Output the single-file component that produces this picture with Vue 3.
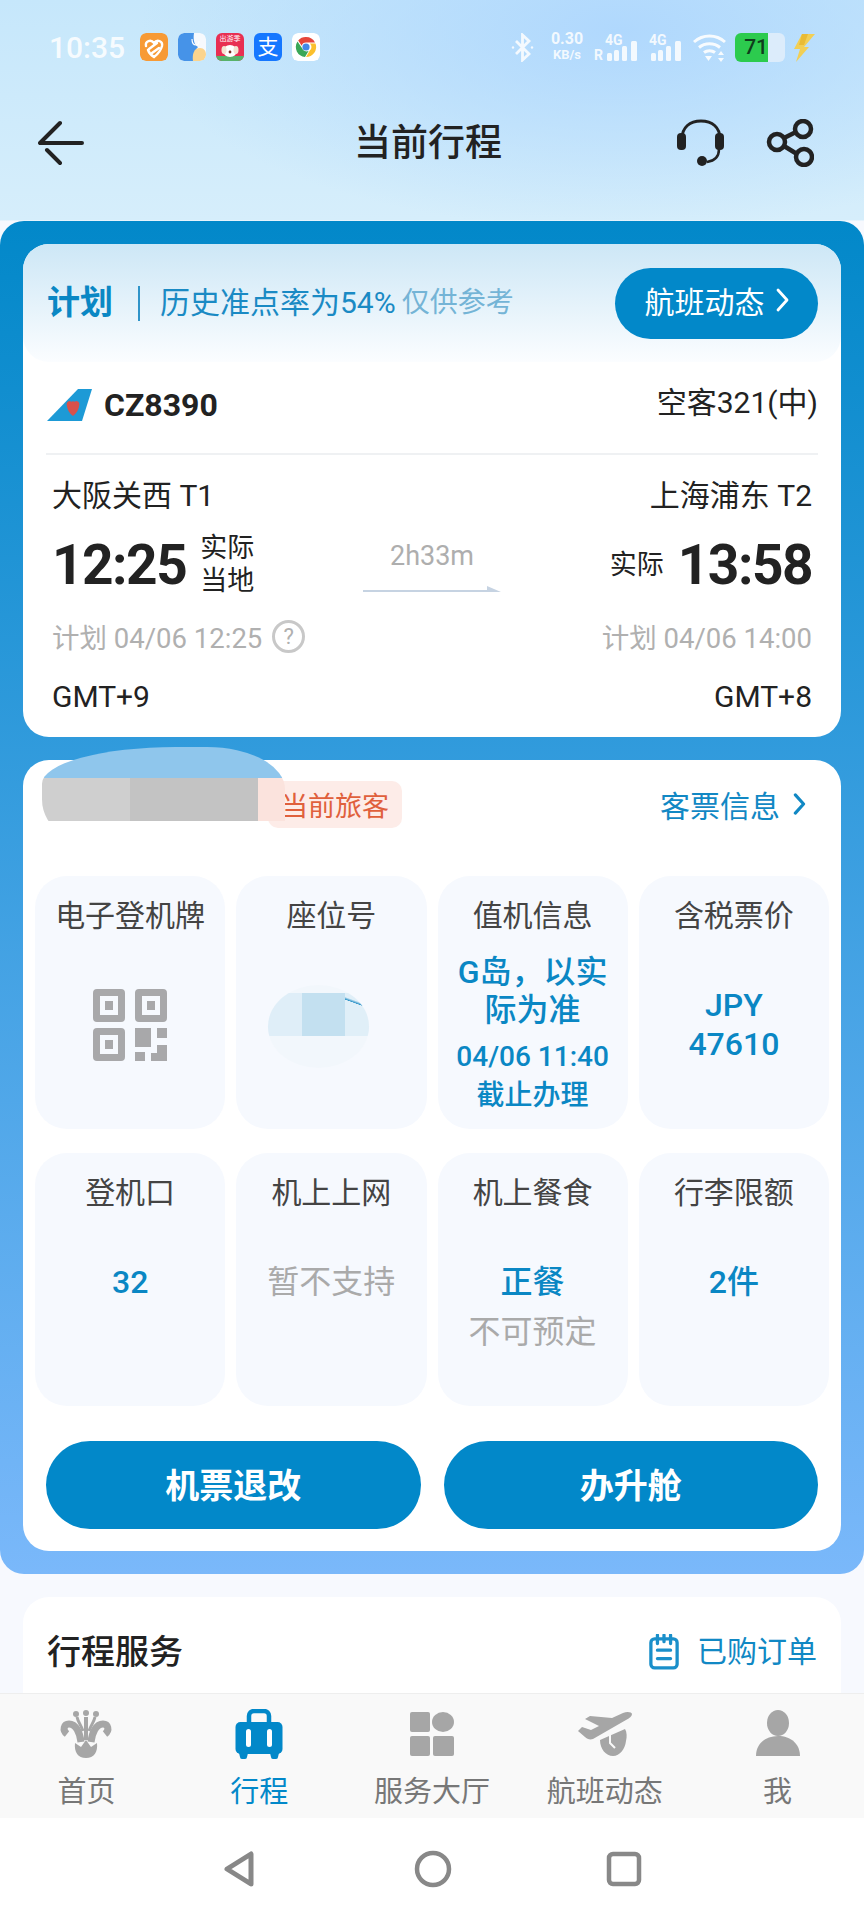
<script setup>
const tabs = [
  { key: 'home', label: '首页' },
  { key: 'trip', label: '行程', active: true },
  { key: 'hall', label: '服务大厅' },
  { key: 'flight', label: '航班动态' },
  { key: 'me', label: '我' },
]
</script>

<template>
  <div class="page">
    <!-- Status bar -->
    <div class="status">
      <span class="status__time">10:35</span>
      <div class="status__apps">
        <svg class="app" viewBox="0 0 28 28">
          <rect width="28" height="28" rx="6" fill="#f79a35" />
          <path d="M6 13c-1-5 5-7 8-3 3-4 9-2 8 3-1 4-4 8-8 11-3-2-5-4-6-7" fill="none" stroke="#fff" stroke-width="2.400" stroke-linecap="round" />
          <path d="M9 16l8-6M12 20l7-5" fill="none" stroke="#fff" stroke-width="2.400" stroke-linecap="round" />
        </svg>
        <svg class="app" viewBox="0 0 28 28">
          <rect width="28" height="28" rx="6" fill="#f6f9fd" />
          <path d="M0 6a6 6 0 0 1 6-6h10c-1 6 0 12 4 14-3 3-5 8-5 14H6a6 6 0 0 1-6-6Z" fill="#4693e8" />
          <path d="M15 28c-1-7 1-13 7-13 4 0 6 3 6 7a6 6 0 0 1-6 6Z" fill="#fbd48d" />
          <path d="M14 6c0 4 2 6 4 6s3-2 3-4" fill="none" stroke="#fff" stroke-width="1.200" />
        </svg>
        <div class="app app--red">
          <span class="app__mini">出游季</span>
          <svg viewBox="0 0 28 28" class="app__art">
            <path d="M0 23h28v5H0Z" fill="#58b26a" />
            <ellipse cx="14" cy="18" rx="7" ry="6" fill="#fff" />
            <ellipse cx="8" cy="17" rx="2.500" ry="4" fill="#f3e3d2" />
            <ellipse cx="20" cy="17" rx="2.500" ry="4" fill="#f3e3d2" />
            <circle cx="14" cy="19" r="1.400" fill="#7a2b20" />
          </svg>
        </div>
        <div class="app app--alipay">支</div>
        <svg class="app" viewBox="0 0 28 28">
          <rect width="28" height="28" rx="6" fill="#fff" />
          <path d="M14 4a10 10 0 0 1 9 5.500H14a4.500 4.500 0 0 0-4.300 3.200L6.200 7.400A10 10 0 0 1 14 4Z" fill="#e6463a" />
          <path d="M5.500 8.500A10 10 0 0 0 13 24l3.700-6.200a4.500 4.500 0 0 1-6.600-2.600Z" fill="#3aa757" />
          <path d="M23.500 10.500A10 10 0 0 1 14 24l3.800-6.500a4.500 4.500 0 0 0 0-7Z" fill="#fbc02d" />
          <circle cx="14" cy="14" r="3.600" fill="#4489e8" />
        </svg>
      </div>

      <div class="status__right">
        <svg class="st-bt" viewBox="0 0 23 29" fill="none" stroke="#fff" stroke-width="2.800">
          <path d="M5 8l13 13-6.500 6V2L18 8 5 21" />
          <circle cx="2" cy="14.500" r="1.200" fill="#fff" stroke="none" />
          <circle cx="21" cy="14.500" r="1.200" fill="#fff" stroke="none" />
        </svg>
        <div class="st-speed">
          <span>0.30</span>
          <span class="st-speed__unit">KB/s</span>
        </div>
        <svg class="st-net" width="45" height="30" viewBox="0 0 45 30">
          <text x="11" y="13" class="st-net__txt">4G</text>
          <text x="0" y="28" class="st-net__r">R</text>
          <g fill="#fff">
            <rect x="13" y="21" width="5" height="8" rx="1.500" />
            <rect x="20" y="18" width="5" height="11" rx="1.500" />
            <rect x="28" y="14" width="5" height="15" rx="1.500" />
            <rect x="37" y="9" width="6" height="20" rx="1.500" />
          </g>
        </svg>
        <svg class="st-net" width="34" height="30" viewBox="0 0 34 30">
          <text x="0" y="13" class="st-net__txt">4G</text>
          <g fill="#fff">
            <rect x="2" y="21" width="5" height="8" rx="1.500" />
            <rect x="9" y="18" width="5" height="11" rx="1.500" />
            <rect x="17" y="14" width="5" height="15" rx="1.500" />
            <rect x="26" y="9" width="6" height="20" rx="1.500" />
          </g>
        </svg>
        <svg class="st-wifi" viewBox="0 0 35 29" fill="none" stroke="#fff" stroke-width="3">
          <path d="M2 9c9-8 22-8 31 0" />
          <path d="M7 14.500c6-5 15-5 21 0" />
          <path d="M12 19.500c3-2.500 8-2.500 11 0" />
          <path d="M13 23h7l-3.500 5Z" fill="#fff" stroke="none" />
          <path d="M29 18l3 4h-6ZM29 29l3-4h-6Z" fill="#fff" stroke="none" />
        </svg>
        <div class="st-batt">
          <div class="st-batt__level">71</div>
          <div class="st-batt__rest"></div>
        </div>
        <svg class="st-bolt" viewBox="0 0 22 29" fill="#f2cf55">
          <path d="M9 1h13L11 14h5L3 29l4-13H1Z" />
          <path d="M9 1 6 12h5L15 1Z" fill="#e9bb35" />
        </svg>
      </div>
    </div>

    <!-- Title bar -->
    <div class="topbar">
      <svg class="topbar__back" viewBox="0 0 48 46" fill="none" stroke="#222" stroke-width="4" stroke-linecap="round">
        <path d="M2 23 22 3M2 23h42M9 30l13 13" />
      </svg>
      <span class="topbar__title">当前行程</span>
      <svg class="topbar__help" viewBox="0 0 48 48" fill="none" stroke="#222" stroke-width="3">
        <path d="M5 20C5 8 13 2 24 2s19 6 19 18" />
        <rect x="0" y="14" width="9" height="17" rx="4" fill="#222" stroke="none" />
        <rect x="38" y="14" width="9" height="17" rx="4" fill="#222" stroke="none" />
        <path d="M42 30c0 8-5 12-12 13" stroke-width="2.500" />
        <circle cx="25" cy="42" r="5" fill="#222" stroke="none" />
      </svg>
      <svg class="topbar__share" viewBox="0 0 48 48" fill="none" stroke="#222" stroke-width="4.500">
        <circle cx="37" cy="10" r="8" />
        <circle cx="11" cy="23" r="8" />
        <circle cx="38" cy="38" r="8" />
        <path d="M18 19 30 13M18 27l13 8" />
      </svg>
    </div>

    <div class="main">
      <section class="panel">
        <!-- Flight card -->
        <div class="card flight">
          <div class="flight__head">
            <span class="flight__plan">计划</span>
            <i class="flight__sep"></i>
            <span class="flight__rate">历史准点率为54%</span>
            <span class="flight__note">仅供参考</span>
            <button class="flight__pill" type="button">
              航班动态
              <svg class="chev" viewBox="0 0 14 24" fill="none" stroke="currentColor" stroke-width="2.800" stroke-linecap="round" stroke-linejoin="round">
                <path d="M3 2l9 10-9 10" />
              </svg>
            </button>
          </div>

          <div class="flight__no">
            <svg class="flight__tail" viewBox="0 0 46 34">
              <path d="M1 33 32 1h14L36 33Z" fill="#1d9ad6" />
              <path d="M24 13c-3 0-4 3-3 5 0 3 3 8 6 10 3-2 6-7 6-10 1-2 0-5-3-5-1 1-2 1-3 0-1 1-2 1-3 0Z" fill="#d8514a" />
            </svg>
            <span class="flight__code">CZ8390</span>
            <span class="flight__model">空客321(中)</span>
          </div>

          <div class="row flight__city">
            <span>大阪关西 T1</span>
            <span>上海浦东 T2</span>
          </div>

          <div class="flight__times">
            <div class="flight__dep">
              <span class="flight__clock">12:25</span>
              <span class="flight__tag">实际<br />当地</span>
            </div>
            <div class="flight__dur">
              <span>2h33m</span>
              <svg width="138" height="9" viewBox="0 0 138 9">
                <path d="M0 7h138l-14-6v4H0Z" fill="#c6d3e2" />
              </svg>
            </div>
            <div class="flight__arr">
              <span class="flight__tag">实际</span>
              <span class="flight__clock">13:58</span>
            </div>
          </div>

          <div class="row flight__sched">
            <span class="flight__sched-left">
              计划 04/06 12:25
              <i class="flight__q">?</i>
            </span>
            <span>计划 04/06 14:00</span>
          </div>

          <div class="row flight__gmt">
            <span>GMT+9</span>
            <span>GMT+8</span>
          </div>
        </div>

        <!-- Passenger card -->
        <div class="card pax">
          <div class="pax__smear">
            <div class="pax__smear-top"></div>
            <div class="pax__smear-mid">
              <i></i><i></i><i></i>
            </div>
          </div>
          <div class="pax__head">
            <span class="pax__badge">当前旅客</span>
            <span class="pax__link">
              客票信息
              <svg class="chev chev--sm" viewBox="0 0 14 24" fill="none" stroke="currentColor" stroke-width="3.400" stroke-linecap="round" stroke-linejoin="round">
                <path d="M3 2l9 10-9 10" />
              </svg>
            </span>
          </div>

          <div class="tiles">
            <div class="tile">
              <div class="tile__label">电子登机牌</div>
              <svg class="tile__qr" viewBox="0 0 74 72" fill="#a8a8aa">
                <path fill-rule="evenodd" d="M4 0h24a4 4 0 0 1 4 4v25a4 4 0 0 1-4 4H4a4 4 0 0 1-4-4V4a4 4 0 0 1 4-4Zm3 7v19h18V7ZM46 0h24a4 4 0 0 1 4 4v25a4 4 0 0 1-4 4H46a4 4 0 0 1-4-4V4a4 4 0 0 1 4-4Zm3 7v19h18V7ZM4 39h24a4 4 0 0 1 4 4v25a4 4 0 0 1-4 4H4a4 4 0 0 1-4-4V43a4 4 0 0 1 4-4Zm3 7v19h18V46Z" />
                <rect x="12" y="12" width="8" height="9" />
                <rect x="54" y="12" width="8" height="9" />
                <rect x="12" y="51" width="8" height="9" />
                <rect x="42" y="39" width="16" height="19" />
                <rect x="64" y="39" width="10" height="10" />
                <rect x="42" y="63" width="10" height="9" />
                <path d="M64 56h10v16H58v-8h6Z" />
              </svg>
            </div>
            <div class="tile">
              <div class="tile__label">座位号</div>
              <div class="tile__seat">
                <div class="tile__seat-band"><i></i><i></i><i></i></div>
              </div>
            </div>
            <div class="tile">
              <div class="tile__label">值机信息</div>
              <div class="tile__val tile__val--checkin">G岛，以实<br />际为准</div>
              <div class="tile__sub">04/06 11:40<br />截止办理</div>
            </div>
            <div class="tile">
              <div class="tile__label">含税票价</div>
              <div class="tile__val tile__val--fare">JPY<br />47610</div>
            </div>
            <div class="tile">
              <div class="tile__label">登机口</div>
              <div class="tile__val tile__val--second">32</div>
            </div>
            <div class="tile">
              <div class="tile__label">机上上网</div>
              <div class="tile__muted tile__val--second">暂不支持</div>
            </div>
            <div class="tile">
              <div class="tile__label">机上餐食</div>
              <div class="tile__val tile__val--second">正餐</div>
              <div class="tile__muted tile__muted--below">不可预定</div>
            </div>
            <div class="tile">
              <div class="tile__label">行李限额</div>
              <div class="tile__val tile__val--second">2件</div>
            </div>
          </div>

          <div class="pax__actions">
            <button class="pax__btn" type="button">机票退改</button>
            <button class="pax__btn" type="button">办升舱</button>
          </div>
        </div>
      </section>

      <!-- Services card, cut off by the tab bar -->
      <section class="services">
        <span class="services__title">行程服务</span>
        <span class="services__orders">
          <svg class="services__icon" viewBox="0 0 32 38" fill="none" stroke="#1a8fca" stroke-width="3.500">
            <rect x="2" y="5" width="28" height="31" rx="4" />
            <path d="M9 1v9M23 1v9M16 1v7M9 17h14M9 26h14" stroke-linecap="round" />
          </svg>
          已购订单
        </span>
      </section>
    </div>

    <!-- Tab bar -->
    <nav class="tabs">
      <div v-for="tab in tabs" :key="tab.key" class="tab" :class="{ 'tab--on': tab.active }">
        <svg v-if="tab.key === 'home'" class="tab__icon" viewBox="0 0 54 50" fill="#a6a6a6">
          <circle cx="17" cy="5" r="3" /><circle cx="27" cy="4" r="3" /><circle cx="37" cy="5" r="3" />
          <g fill="none" stroke="#a6a6a6">
            <path d="M8 25C3 21 5 15 10 15c7 0 11 9 12 18" stroke-width="7" />
            <path d="M46 25c5-4 3-10-2-10-7 0-11 9-12 18" stroke-width="7" />
            <path d="M27 8v23" stroke-width="4" />
            <path d="M18 8c1 5 4 8 6 14M36 8c-1 5-4 8-6 14" stroke-width="3" />
          </g>
          <path d="M16 34l6 4 5-7 5 7 6-4c1 9-3 15-11 15s-12-6-11-15Z" />
        </svg>
        <svg v-else-if="tab.key === 'trip'" class="tab__icon" viewBox="0 0 54 50">
          <path d="M17 15V7a5 5 0 0 1 5-5h10a5 5 0 0 1 5 5v8" fill="none" stroke="#0288c9" stroke-width="4.500" />
          <rect x="3.500" y="13" width="47" height="32" rx="5" fill="#0288c9" />
          <path d="M7 44h9l-1 4a2 2 0 0 1-2 2h-3a2 2 0 0 1-2-2ZM38 44h9l-1 4a2 2 0 0 1-2 2h-3a2 2 0 0 1-2-2Z" fill="#0288c9" />
          <rect x="14" y="20" width="5" height="18" rx="2.500" fill="#fff" />
          <rect x="35" y="20" width="5" height="18" rx="2.500" fill="#fff" />
        </svg>
        <svg v-else-if="tab.key === 'hall'" class="tab__icon" viewBox="0 0 54 50" fill="#a6a6a6">
          <rect x="5" y="3" width="20" height="20" rx="2" />
          <ellipse cx="38" cy="13" rx="11" ry="10" />
          <rect x="5" y="27" width="20" height="20" rx="2" />
          <rect x="28" y="27" width="21" height="20" rx="2" />
        </svg>
        <svg v-else-if="tab.key === 'flight'" class="tab__icon tab__icon--wide" viewBox="0 0 56 48" fill="#a6a6a6">
          <path d="M1 21l4-4 9 3 8-4L8 9l5-3 22 2 11-5c4-2 9-1 9 1s-2 4-6 6L16 29c-3 1-6 0-8-2Z" />
          <path d="M23 30 48 19c2 3 2 8 1 12-1 8-6 15-13 15s-13-7-13-16Z" />
          <path d="M33 25v8l5 5" fill="none" stroke="#f9f9f9" stroke-width="2" />
        </svg>
        <svg v-else class="tab__icon" viewBox="0 0 54 50" fill="#a6a6a6">
          <ellipse cx="27" cy="14" rx="11" ry="13" />
          <path d="M5 47c0-12 9-20 22-20s22 8 22 20Z" />
        </svg>
        <span class="tab__label">{{ tab.label }}</span>
      </div>
    </nav>

    <!-- Android navigation -->
    <div class="sysnav">
      <svg class="sysnav__back" viewBox="0 0 32 36" fill="none" stroke="#888" stroke-width="5" stroke-linejoin="round">
        <path d="M28 3v30L4 18Z" />
      </svg>
      <svg class="sysnav__home" viewBox="0 0 38 38" fill="none" stroke="#888" stroke-width="4.500">
        <circle cx="19" cy="19" r="16" />
      </svg>
      <svg class="sysnav__recent" viewBox="0 0 36 36" fill="none" stroke="#888" stroke-width="4.500">
        <rect x="3" y="3" width="30" height="30" rx="4" />
      </svg>
    </div>
  </div>
</template>

<style>
html,
body {
  margin: 0;
  background: #f7f9fe;
}
</style>

<style scoped>
.page {
  width: 864px;
  height: 1920px;
  display: flex;
  flex-direction: column;
  overflow: hidden;
  font-family: Roboto, "Noto Sans CJK SC", sans-serif;
  color: #222;
  background:
    radial-gradient(ellipse 480px 200px at 620px 30px, #b0d8fd 0%, rgba(176, 216, 253, 0) 100%),
    linear-gradient(180deg, #c6e7fb 0, #d6eefb 220px, #f7f9fe 221px);
}

/* Status bar */
.status {
  height: 62px;
  padding: 16px 49px 0;
  display: flex;
  align-items: center;
  flex-shrink: 0;
}

.status__time {
  width: 79px;
  font-size: 30px;
  font-weight: 500;
  color: rgba(255, 255, 255, 0.85);
}

.status__apps {
  margin-left: 12px;
  display: flex;
  gap: 10px;
}

.app {
  width: 28px;
  height: 28px;
  display: block;
  border-radius: 6px;
  overflow: hidden;
}

.app--red {
  background: #e82f52;
  display: flex;
  flex-direction: column;
  align-items: center;
  position: relative;
}

.app__mini {
  font-size: 7px;
  line-height: 12px;
  color: #fff;
  white-space: nowrap;
}

.app__art {
  position: absolute;
  inset: 0;
}

.app--alipay {
  background: #1677ff;
  color: #fff;
  font-size: 21px;
  line-height: 28px;
  text-align: center;
}

.status__right {
  margin-left: auto;
  display: flex;
  align-items: center;
}

.st-bt {
  width: 23px;
  height: 29px;
  opacity: 0.85;
}

.st-speed {
  width: 34px;
  margin-left: 16px;
  display: flex;
  flex-direction: column;
  align-items: center;
  font-size: 16px;
  font-weight: 700;
  line-height: 16px;
  color: rgba(255, 255, 255, 0.85);
}

.st-speed__unit {
  font-size: 13px;
}

.st-net {
  margin-left: 10px;
  opacity: 0.85;
}

.st-net__txt {
  font-size: 14px;
  font-weight: 700;
  fill: #fff;
}

.st-net__r {
  font-size: 14px;
  font-weight: 700;
  fill: #fff;
}

.st-wifi {
  width: 35px;
  height: 29px;
  margin-left: 9px;
  opacity: 0.9;
}

.st-batt {
  width: 50px;
  height: 29px;
  margin-left: 8px;
  display: flex;
  border-radius: 6px;
  overflow: hidden;
}

.st-batt__level {
  width: 33px;
  background: #2ccb4e;
  font-size: 21px;
  font-weight: 500;
  line-height: 29px;
  text-align: right;
  color: #0f3d1c;
}

.st-batt__rest {
  flex: 1;
  background: #dcecfb;
}

.st-bolt {
  width: 22px;
  height: 29px;
  margin-left: 8px;
}

/* Title bar */
.topbar {
  height: 130px;
  margin-bottom: 13px;
  padding: 0 50px 0 38px;
  display: flex;
  align-items: center;
  position: relative;
  flex-shrink: 0;
}

.topbar__back {
  width: 48px;
  height: 46px;
}

.topbar__title {
  position: absolute;
  left: 0;
  right: 8px;
  padding-bottom: 6px;
  text-align: center;
  font-size: 37px;
  font-weight: 500;
  pointer-events: none;
}

.topbar__help {
  width: 48px;
  height: 48px;
  margin-left: auto;
}

.topbar__share {
  width: 48px;
  height: 48px;
  margin-left: 41px;
}

/* Blue panel */
.main {
  flex: 1;
  min-height: 0;
  overflow: hidden;
}

.panel {
  padding: 23px;
  display: flex;
  flex-direction: column;
  gap: 23px;
  border-radius: 24px;
  background: linear-gradient(180deg, #0288c9 0%, #7ab8fa 100%);
}

.card {
  background: #fff;
  border-radius: 26px;
}

.row {
  display: flex;
  justify-content: space-between;
  align-items: center;
}

/* Flight card */
.flight {
  height: 493px;
}

.flight__head {
  height: 118px;
  padding: 0 23px 0 24px;
  display: flex;
  align-items: center;
  border-radius: 26px;
  background: linear-gradient(180deg, #cde7f6 0%, #fbfdff 100%);
}

.flight__plan {
  margin-bottom: 6px;
  font-size: 33px;
  font-weight: 700;
  color: #0a87c4;
}

.flight__sep {
  width: 2px;
  height: 35px;
  margin: 0 20px 0 25px;
  background: #2f94c9;
}

.flight__rate {
  margin-bottom: 6px;
  font-size: 30px;
  color: #1a8ac4;
}

.flight__note {
  margin-left: 6px;
  margin-bottom: 6px;
  font-size: 28px;
  color: #74b4d6;
}

.flight__pill {
  margin-left: auto;
  width: 203px;
  height: 71px;
  padding: 0 0 6px;
  display: flex;
  align-items: center;
  justify-content: center;
  gap: 10px;
  border: 0;
  border-radius: 36px;
  background: #0288c9;
  color: #fff;
  font-family: inherit;
  font-size: 30px;
}

.chev {
  width: 14px;
  height: 26px;
}

.chev--sm {
  height: 22px;
  color: #1188c4;
}

.flight__no {
  height: 86px;
  margin: 0 23px 6px;
  padding-bottom: 6px;
  box-sizing: border-box;
  display: flex;
  align-items: center;
  position: relative;
}

.flight__no::after {
  content: "";
  position: absolute;
  left: 0;
  right: 0;
  bottom: -7px;
  height: 2px;
  background: #eff1f3;
}

.flight__tail {
  width: 46px;
  height: 34px;
  margin-top: 6px;
}

.flight__code {
  margin-left: 12px;
  margin-top: 6px;
  font-size: 32px;
  font-weight: 700;
  color: #222;
}

.flight__model {
  margin-left: auto;
  margin-top: -4px;
  font-size: 30px;
  color: #222;
}

.flight__city {
  height: 77px;
  padding: 0 29px 4px;
  font-size: 30px;
  color: #222;
}

.flight__times {
  height: 60px;
  margin-top: -3px;
  padding: 0 29px;
  display: grid;
  grid-template-columns: 1fr auto 1fr;
  align-items: center;
}

.flight__dep,
.flight__arr {
  display: flex;
  align-items: center;
}

.flight__arr {
  justify-content: flex-end;
}

.flight__clock {
  font-size: 55px;
  font-weight: 700;
  letter-spacing: -1.500px;
  color: #222;
}

.flight__dep .flight__tag {
  margin-left: 14px;
}

.flight__arr .flight__tag {
  margin-right: 14px;
}

.flight__tag {
  font-size: 27px;
  line-height: 33px;
  color: #222;
}

.flight__dur {
  width: 138px;
  height: 60px;
  display: flex;
  flex-direction: column;
  align-items: center;
  font-size: 27px;
  line-height: 42px;
  color: #aeaeae;
}

.flight__dur svg {
  display: block;
  margin-top: 8px;
}

.flight__sched {
  height: 50px;
  margin-top: 19px;
  padding: 0 29px;
  font-size: 27.500px;
  color: #b0b0b0;
}

.flight__sched-left {
  display: flex;
  align-items: center;
  gap: 10px;
}

.flight__q {
  width: 27px;
  height: 27px;
  display: flex;
  align-items: center;
  justify-content: center;
  border: 3px solid #c8c8c8;
  border-radius: 50%;
  font-style: normal;
  font-size: 22px;
  color: #b0b0b0;
}

.flight__gmt {
  height: 50px;
  margin-top: 10px;
  padding: 0 29px;
  font-size: 30px;
  color: #222;
}

/* Passenger card */
.pax {
  height: 791px;
  position: relative;
}

/* Privacy smear over the passenger name */
.pax__smear {
  position: absolute;
  z-index: 1;
  left: 19px;
  top: -13px;
  width: 243px;
  height: 105px;
  overflow: hidden;
  border-radius: 55% 32% 25% 30% / 35% 40% 30% 50%;
}

.pax__smear-top {
  height: 31px;
  background: #8fc6ec;
}

.pax__smear-mid {
  height: 43px;
  display: flex;
}

.pax__smear-mid i:nth-child(1) {
  width: 88px;
  background: #cfcfcf;
}

.pax__smear-mid i:nth-child(2) {
  width: 128px;
  background: #c3c3c3;
}

.pax__smear-mid i:nth-child(3) {
  flex: 1;
  background: #fbe3dd;
}

.pax__head {
  height: 88px;
  padding: 0 35px 0 245px;
  display: flex;
  align-items: center;
  justify-content: space-between;
}

.pax__badge {
  padding: 0 13px;
  height: 47px;
  display: flex;
  align-items: center;
  border-radius: 10px;
  background: #fdece8;
  font-size: 27px;
  color: #e0603c;
}

.pax__link {
  display: flex;
  align-items: center;
  gap: 12px;
  font-size: 30px;
  color: #1188c4;
}

.tiles {
  margin-top: 28px;
  padding: 0 12px;
  display: grid;
  grid-template-columns: repeat(4, 1fr);
  grid-auto-rows: 253px;
  gap: 24px 11px;
}

.tile {
  padding-top: 20px;
  display: flex;
  flex-direction: column;
  align-items: center;
  text-align: center;
  border-radius: 32px;
  background: #f6f9fe;
}

.tile__label {
  font-size: 30px;
  line-height: 40px;
  color: #444;
}

.tile__qr {
  width: 74px;
  height: 72px;
  margin-top: 53px;
}

.tile__seat {
  width: 101px;
  height: 83px;
  margin-top: 49px;
  margin-right: 25px;
  padding-top: 8px;
  box-sizing: border-box;
  overflow: hidden;
  border-radius: 50%;
  background: #f2f7fc;
}

.tile__seat-band {
  height: 43px;
  display: flex;
}

.tile__seat-band i:nth-child(1) {
  width: 34px;
  background: #dfeef8;
}

.tile__seat-band i:nth-child(2) {
  width: 43px;
  background: #c3e0f0;
}

.tile__seat-band i:nth-child(3) {
  flex: 1;
  background: linear-gradient(20deg, #e0eff8 70%, #2f94c9 71%, #e0eff8 76%);
}

.tile__val {
  font-size: 32px;
  font-weight: 500;
  line-height: 38px;
  color: #0a87c4;
}

.tile__val--checkin {
  margin-top: 17px;
}

.tile__val--fare {
  margin-top: 50px;
  line-height: 39px;
}

.tile__val--second {
  margin-top: 50px;
}

.tile__sub {
  margin-top: 8px;
  font-size: 28px;
  font-weight: 500;
  line-height: 39px;
  color: #0a87c4;
}

.tile__muted {
  font-size: 32px;
  line-height: 38px;
  color: #aaa;
}

.tile__muted--below {
  margin-top: 12px;
}

.pax__actions {
  margin-top: 35px;
  padding: 0 23px;
  display: grid;
  grid-template-columns: 1fr 1fr;
  gap: 23px;
}

.pax__btn {
  height: 88px;
  padding: 0 0 4px;
  border: 0;
  border-radius: 44px;
  background: #0288c9;
  color: #fff;
  font-family: inherit;
  font-size: 34px;
  font-weight: 700;
}

/* Services */
.services {
  height: 120px;
  margin: 23px 23px 0;
  padding: 30px 24px 0;
  box-sizing: border-box;
  display: flex;
  justify-content: space-between;
  align-items: flex-start;
  border-radius: 26px 26px 0 0;
  background: #fff;
}

.services__title {
  font-size: 34px;
  font-weight: 500;
  line-height: 50px;
  color: #222;
}

.services__orders {
  display: flex;
  align-items: center;
  gap: 18px;
  font-size: 30px;
  line-height: 50px;
  color: #1188c4;
}

.services__icon {
  width: 30px;
  height: 36px;
}

/* Tab bar */
.tabs {
  height: 125px;
  box-sizing: border-box;
  padding-top: 15px;
  display: grid;
  grid-template-columns: repeat(5, 1fr);
  flex-shrink: 0;
  border-top: 1px solid #eee;
  background: #f9f9f9;
}

.tab {
  display: flex;
  flex-direction: column;
  align-items: center;
}

.tab__icon {
  width: 54px;
  height: 50px;
}

.tab__icon--wide {
  width: 56px;
}

.tab__label {
  margin-top: 15px;
  font-size: 29px;
  line-height: 36px;
  color: #777;
}

.tab--on .tab__label {
  color: #0288c9;
}

/* System nav */
.sysnav {
  height: 102px;
  flex-shrink: 0;
  display: flex;
  align-items: center;
  justify-content: center;
  background: #fff;
}

.sysnav__back {
  width: 32px;
  height: 36px;
}

.sysnav__home {
  width: 38px;
  height: 38px;
  margin-left: 159px;
}

.sysnav__recent {
  width: 36px;
  height: 36px;
  margin-left: 154px;
}
</style>
